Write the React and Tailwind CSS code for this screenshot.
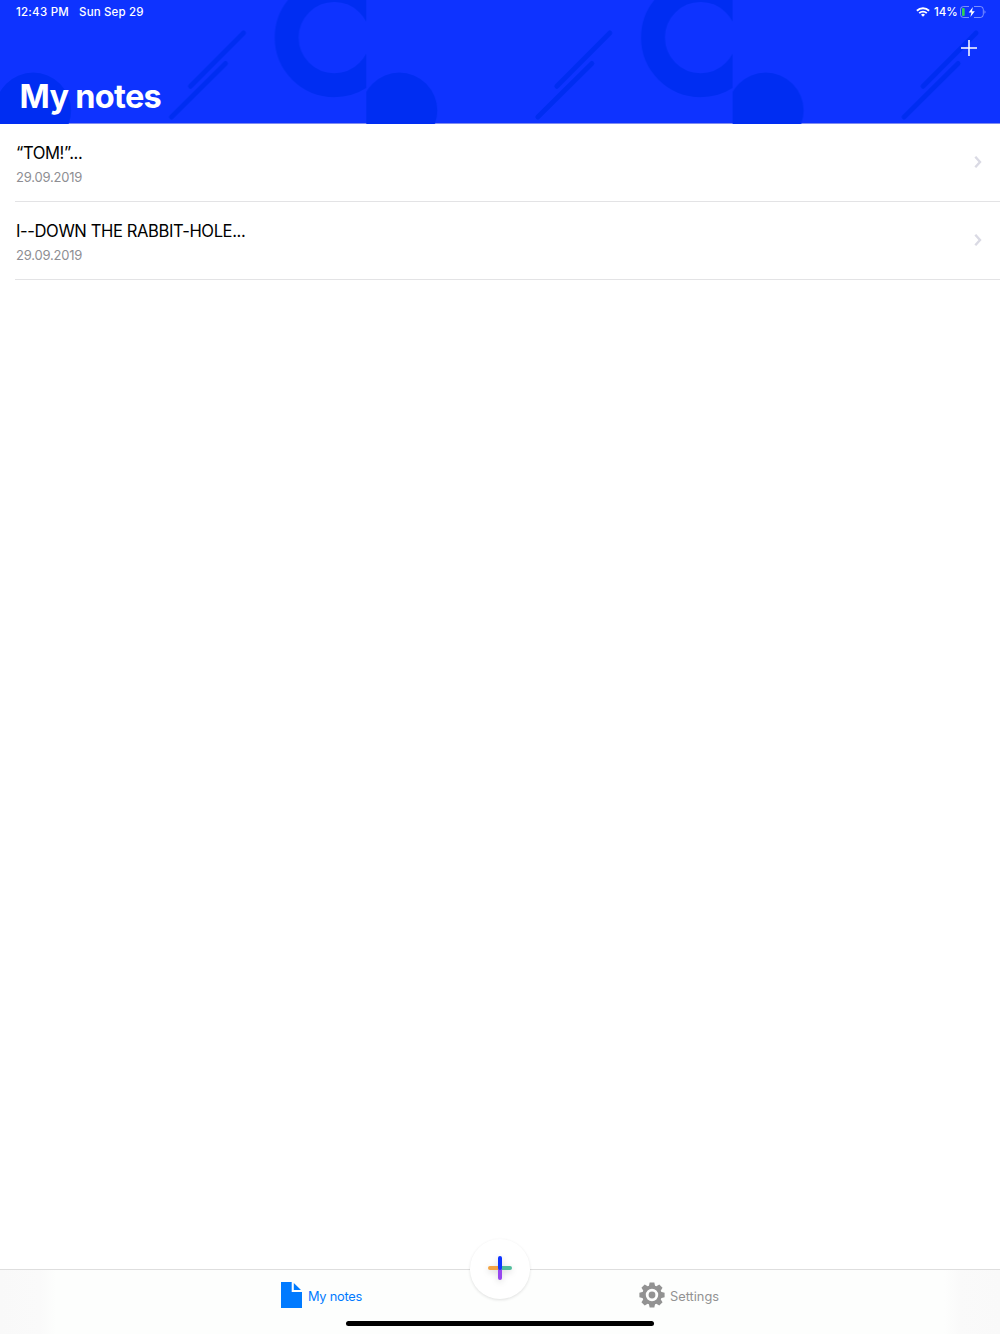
const notes = [
    { id: 1, title: '“TOM!”...', date: '29.09.2019' },
    { id: 2, title: 'I--DOWN THE RABBIT-HOLE...', date: '29.09.2019' },
];

// One tile of the header pattern, repeated along x
function HeaderPattern() {
    return (
        <svg className="absolute inset-0" width="1000" height="124" fill="none">
            <defs>
                <pattern id="shapes" width="366.3" height="124" patternUnits="userSpaceOnUse">
                    <circle cx="33.1" cy="110.5" r="38" fill="#002df2" />
                    <circle cx="334.3" cy="37.6" r="47.6" stroke="#002df2" strokeWidth="24" />
                    <g stroke="#002df2" strokeWidth="5" strokeLinecap="round">
                        <path d="M243.5 33 190.5 86.3" />
                        <path d="M225.5 63.5 171.5 117" />
                    </g>
                </pattern>
            </defs>
            <rect width="1000" height="124" fill="url(#shapes)" />
        </svg>
    );
}

function WifiIcon() {
    return (
        <svg width="14" height="10" viewBox="0 0 14 10" fill="none" stroke="white">
            <path d="M.9 3.7a8.7 8.7 0 0 1 12.2 0" strokeWidth="1.9" />
            <path d="M3.2 6.1a5.4 5.4 0 0 1 7.6 0" strokeWidth="1.8" />
            <path d="M7 9.8 5 7.7a2.9 2.9 0 0 1 4 0z" fill="white" stroke="none" />
        </svg>
    );
}

function BatteryIcon() {
    return (
        <svg width="26" height="12" viewBox="0 0 26 12" fill="none">
            <path
                d="M9 .5H3.5a3 3 0 0 0-3 3v5a3 3 0 0 0 3 3H9M14 .5h6.3a3 3 0 0 1 3 3v5a3 3 0 0 1-3 3H14"
                stroke="white"
                strokeOpacity=".45"
            />
            <path d="M24.5 4.2c1.3.6 1.3 3 0 3.6z" fill="white" fillOpacity=".5" />
            <rect x="2" y="2" width="2.7" height="8" rx="1" fill="#30d158" />
            <path d="M12.9 1 8.7 6.5h2.7L10.4 11l4.4-5.700h-2.800z" fill="white" />
        </svg>
    );
}

function GearIcon() {
    return (
        <svg width="26" height="26" viewBox="-13 -13 26 26" fill="#929292">
            <path
                fillRule="evenodd"
                d="M0-9.8a9.8 9.8 0 1 0 0 19.6a9.8 9.8 0 1 0 0-19.6zM0-6.2a6.2 6.2 0 1 1 0 12.4a6.2 6.2 0 1 1 0-12.4z"
            />
            <circle r="3.4" />
            {[0, 45, 90, 135, 180, 225, 270, 315].map(angle => (
                <path key={angle} d="M-3.2-8.8-2.3-12.6h4.6l.9 3.8z" transform={`rotate(${angle})`} />
            ))}
        </svg>
    );
}

function NoteRow({ note }) {
    return (
        <li className="ml-[15px] flex h-[78px] items-center justify-between border-b border-[#e3e3e5] pr-[18px] pl-px">
            <div className="pt-[5px]">
                <p className="text-[16.6px] leading-6 tracking-[-0.4px] text-black">{note.title}</p>
                <p className="text-[13px] leading-6 tracking-[-0.2px] text-[#8e8e93]">{note.date}</p>
            </div>
            <svg className="mb-px" width="8" height="12" viewBox="0 0 8 12" fill="none" stroke="#dadae4" strokeWidth="2.4">
                <path d="m1.3.8 4.700 5.200-4.700 5.200" />
            </svg>
        </li>
    );
}

export default function App() {
    return (
        <div className="flex h-[1334px] w-[1000px] flex-col overflow-hidden bg-white font-['Inter',sans-serif]">
            {/* Header */}
            <header className="relative h-[124px] shrink-0 border-b border-[#7f8cf0] bg-[#0e33ff] text-white">
                <HeaderPattern />
                <div className="relative flex h-6 items-center justify-between pr-[14px] pl-4 text-[11.5px] font-medium">
                    <div className="flex gap-[10px] pt-px">
                        <span className="tracking-[0.25px]">12:43 PM</span>
                        <span className="tracking-[0.15px]">Sun Sep 29</span>
                    </div>
                    <div className="flex items-center">
                        <WifiIcon />
                        <span className="ml-[4px] w-[26px] pt-px whitespace-nowrap">14%</span>
                        <BatteryIcon />
                    </div>
                </div>
                <div className="relative flex h-12 justify-end pr-[23px]">
                    <svg className="mt-4" width="16" height="16" stroke="white" strokeWidth="1.5">
                        <path d="M8 0v16M0 8h16" />
                    </svg>
                </div>
                <h1 className="relative pt-px pl-[19.5px] text-[32.5px] leading-[48px] font-bold tracking-[-0.7px]">My notes</h1>
            </header>

            {/* Notes */}
            <ul className="flex-1">
                {notes.map(note => (
                    <NoteRow key={note.id} note={note} />
                ))}
            </ul>

            {/* Tab bar */}
            <nav className="relative h-[65px] shrink-0 border-t border-[#dedede] bg-[linear-gradient(to_right,#f9f9f9_0,#fafafa_40px,#fdfefd_56px,#fdfefd_944px,#fafafa_960px,#f9f9f9_1000px)]">
                <div className="flex h-[50px] items-center">
                    <div className="ml-[281px] flex w-[358px] items-center gap-[6px] text-[#007aff]">
                        <svg width="21" height="26" viewBox="0 0 21 26" fill="currentColor">
                            <path d="M0 0h10.7v10H21v16H0zM12.8 1v7H20z" />
                        </svg>
                        <span className="pt-[3px] text-[12.8px] tracking-[-0.25px]">My notes</span>
                    </div>
                    <div className="flex items-center gap-[5px] text-[#929292]">
                        <GearIcon />
                        <span className="pt-[3px] text-[12.8px]">Settings</span>
                    </div>
                </div>
                <div className="absolute top-[-31px] left-[470px] flex size-[60px] items-center justify-center rounded-full bg-white shadow-[0_1px_3px_rgba(0,0,0,0.12)]">
                    <svg
                        className="mb-[2px] drop-shadow-[0_2px_3px_rgba(0,0,0,0.15)]"
                        width="24"
                        height="24"
                        fill="none"
                        strokeWidth="4"
                        strokeLinecap="round"
                    >
                        <path d="M2 12h8" stroke="#f2a444" />
                        <path d="M14 12h8" stroke="#52bd9c" />
                        <path d="M12 14v8" stroke="#9747ef" />
                        <path d="M12 2v10" stroke="#0e33ff" />
                    </svg>
                </div>
                <div className="absolute bottom-[8px] left-[346px] h-[5px] w-[308px] rounded-full bg-black" />
            </nav>
        </div>
    );
}
